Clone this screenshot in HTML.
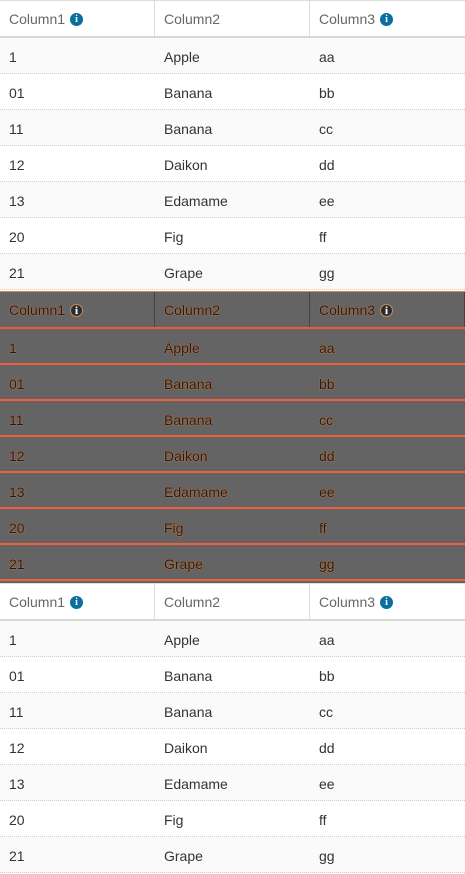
<!DOCTYPE html>
<html><head><style>
*{margin:0;padding:0;box-sizing:border-box}
body{width:465px;height:873px;overflow:hidden;background:#fff;font-family:"Liberation Sans",sans-serif;font-size:14px}
.t{position:absolute;left:0;width:465px;height:291px}
.h{height:38px;border-top:1px solid #ddd;border-bottom:2px solid #d8d8d8;display:flex;background:#fff}
.h div{width:155px;padding-left:9px;padding-top:1px;line-height:35px;color:#666;border-right:1px solid #ddd;display:flex;align-items:center}
.h div:last-child{border-right:none;flex:1}
.r{height:36px;display:flex;border-bottom:1px dotted #ccc;color:#333}
.r:nth-child(even){background:#fafafa}
.r div{width:155px;padding-left:9px;padding-top:2px;line-height:35px}
.i{display:inline-block;width:13px;height:13px;border-radius:50%;background:#0a6e9e;color:#fff;font-size:10px;font-weight:bold;line-height:13px;text-align:center;margin-left:5px;font-family:"Liberation Serif",serif}
.d{background:#646464}
.d .h{background:#646464;border-top:1px solid #d88a3a;border-bottom:2px solid #ef5a3f}
.d .h div{color:#1e1e1e;border-right:1px solid #444;text-shadow:0 0 1px #f07a2e,0 0 1px #f07a2e}
.d .r{background:#646464;border-bottom:2px solid #f06040;color:#1e1e1e;text-shadow:0 0 1px #f07a2e,0 0 1px #f07a2e}
.d .i{background:#1a3040;border:1px solid #d88a3a}
</style></head><body>
<div class="t" style="top:0">
<div class="h"><div>Column1<span class="i">i</span></div><div>Column2</div><div>Column3<span class="i">i</span></div></div>
<div class="r"><div>1</div><div>Apple</div><div>aa</div></div>
<div class="r"><div>01</div><div>Banana</div><div>bb</div></div>
<div class="r"><div>11</div><div>Banana</div><div>cc</div></div>
<div class="r"><div>12</div><div>Daikon</div><div>dd</div></div>
<div class="r"><div>13</div><div>Edamame</div><div>ee</div></div>
<div class="r"><div>20</div><div>Fig</div><div>ff</div></div>
<div class="r"><div>21</div><div>Grape</div><div>gg</div></div>
</div>
<div class="t d" style="top:291px;height:292px">
<div class="h"><div>Column1<span class="i">i</span></div><div>Column2</div><div>Column3<span class="i">i</span></div></div>
<div class="r"><div>1</div><div>Apple</div><div>aa</div></div>
<div class="r"><div>01</div><div>Banana</div><div>bb</div></div>
<div class="r"><div>11</div><div>Banana</div><div>cc</div></div>
<div class="r"><div>12</div><div>Daikon</div><div>dd</div></div>
<div class="r"><div>13</div><div>Edamame</div><div>ee</div></div>
<div class="r"><div>20</div><div>Fig</div><div>ff</div></div>
<div class="r"><div>21</div><div>Grape</div><div>gg</div></div>
</div>
<div class="t" style="top:583px">
<div class="h"><div>Column1<span class="i">i</span></div><div>Column2</div><div>Column3<span class="i">i</span></div></div>
<div class="r"><div>1</div><div>Apple</div><div>aa</div></div>
<div class="r"><div>01</div><div>Banana</div><div>bb</div></div>
<div class="r"><div>11</div><div>Banana</div><div>cc</div></div>
<div class="r"><div>12</div><div>Daikon</div><div>dd</div></div>
<div class="r"><div>13</div><div>Edamame</div><div>ee</div></div>
<div class="r"><div>20</div><div>Fig</div><div>ff</div></div>
<div class="r"><div>21</div><div>Grape</div><div>gg</div></div>
</div>
</body></html>
